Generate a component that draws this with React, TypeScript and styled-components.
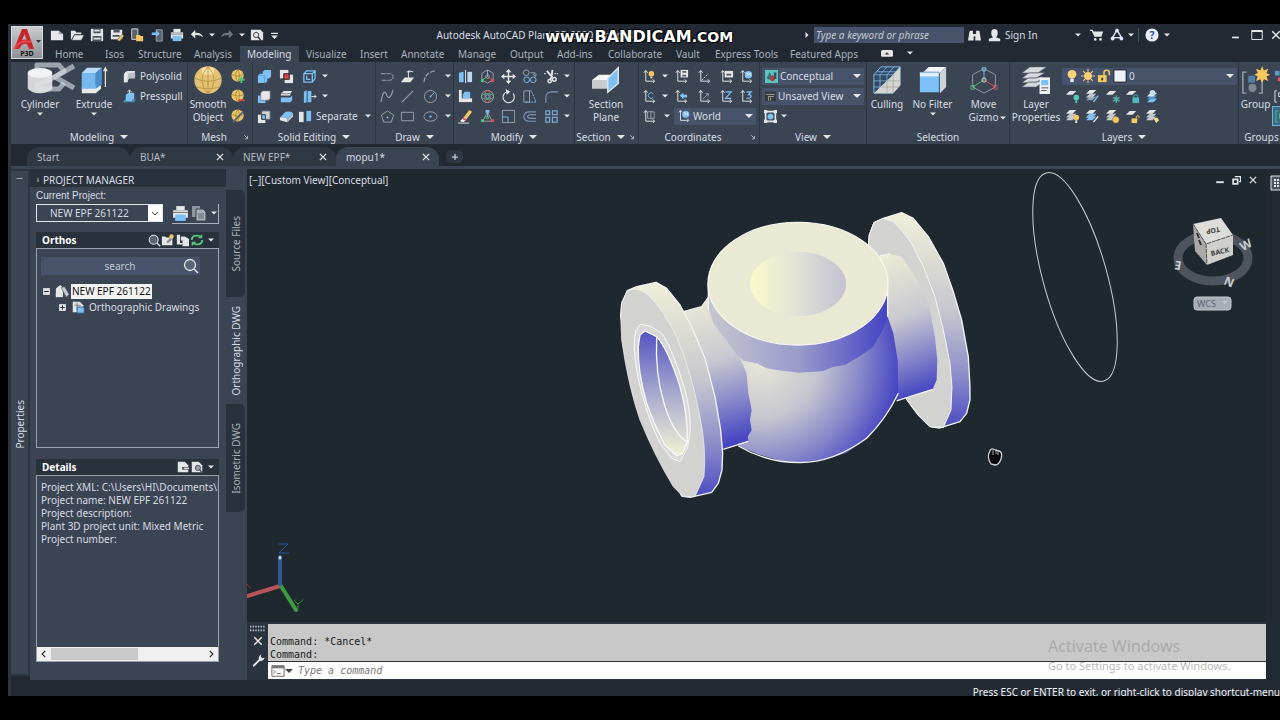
import React from "react";
import styled, { createGlobalStyle, css } from "styled-components";

const color = {
  panel: "#3b4453",
  bar: "#222933",
  canvas: "#20282f",
  dark: "#29313d",
  edge: "#2b333f",
  line: "#2d3541",
  field: "#46536a",
  text: "#d8dde4",
  muted: "#a9b1bb",
  frame: "#97a2b0",
};

const GlobalStyle = createGlobalStyle`
  * { box-sizing: border-box; }
  body { margin: 0; background: #000; overflow: hidden; }
  button, input, select {
    font: inherit; color: inherit; background: none; border: 0; margin: 0; padding: 0; border-radius: 0;
  }
  button { cursor: pointer; }
  svg { display: block; flex: none; }
`;

const Page = styled.div`
  height: 100vh;
  padding: 24px 0 24px 8px;
  background: #000;
  color: ${color.text};
  font: 10px/14px "Noto Sans", "Segoe UI", sans-serif;
`;

const Window = styled.div`
  display: flex;
  flex-direction: column;
  height: 100%;
  border-left: 3px solid ${color.edge};
  background: ${color.bar};
  overflow: hidden;
  white-space: nowrap;
  position: relative;
`;

/* ---------- header ---------- */

const Header = styled.header`
  display: flex;
  height: 38px;
  flex: none;
`;

const AppButton = styled.button`
  display: flex;
  flex: none;
  align-items: center;
  width: 32px;
  height: 33px;
  margin-top: 2px;
  background: linear-gradient(#c9cbce, #8e9196);
  border: 1px solid #d6d8da;
`;

const HeaderRows = styled.div`
  flex: 1;
  min-width: 0;
  display: flex;
  flex-direction: column;
`;

const TitleRow = styled.div`
  display: flex;
  align-items: center;
  height: 22px;
`;

const QuickBar = styled.div`
  display: flex;
  padding-left: 4px;
  flex: none;
`;

const IconButton = styled.button<{ $w?: number; $h?: number; $on?: boolean }>`
  display: flex;
  flex: none;
  align-items: center;
  justify-content: center;
  width: ${(p) => p.$w ?? 20}px;
  height: ${(p) => p.$h ?? 20}px;
  ${(p) => p.$on && css`background: #3d6a86; border: 1px solid #6fb1dc;`}
`;

const WindowTitle = styled.h1`
  flex: 1;
  margin: 0;
  padding-right: 12px;
  font-size: 10px;
  font-weight: 400;
  text-align: center;
  white-space: pre;
  overflow: hidden;
`;

const TitleTools = styled.div`
  display: flex;
  align-items: center;
  flex: none;
  width: 478px;
`;

const KeywordInput = styled.input`
  flex: none;
  width: 150px;
  height: 16px;
  margin-left: 2px;
  padding: 0 2px;
  background: ${color.field};
  font-style: italic;
  &::placeholder { color: #c3cad3; opacity: 1; }
`;

const SignIn = styled.button`
  flex: none;
  width: 64px;
  padding-left: 1px;
  text-align: left;
`;

const Divider = styled.span`
  flex: none;
  width: 1px;
  height: 14px;
  margin: 0 3px;
  background: #48515e;
`;

const WindowControls = styled.div`
  display: flex;
  flex: none;
  padding-left: 53px;
`;

const MenuRow = styled.nav`
  display: flex;
  height: 16px;
  padding-left: 5px;
`;

const MenuTab = styled.a<{ $w: number; $on?: boolean }>`
  flex: none;
  width: ${(p) => p.$w}px;
  padding-left: 7px;
  line-height: 16px;
  color: ${(p) => (p.$on ? color.text : color.muted)};
  background: ${(p) => (p.$on ? color.panel : "none")};
  text-decoration: none;
`;

/* ---------- ribbon ---------- */

const Ribbon = styled.div`
  display: flex;
  flex: none;
  height: 82px;
  background: ${color.panel};
`;

const PanelBox = styled.section<{ $w: number }>`
  display: flex;
  flex-direction: column;
  flex: none;
  width: ${(p) => p.$w}px;
  border-right: 1px solid ${color.line};
`;

const PanelBody = styled.div<{ $pad?: number }>`
  display: flex;
  height: 67px;
  padding: 4px 0 0 ${(p) => p.$pad ?? 0}px;
`;

const PanelTitle = styled.div`
  display: flex;
  align-items: center;
  height: 15px;
`;

const PanelName = styled.h2`
  display: flex;
  align-items: center;
  justify-content: center;
  gap: 6px;
  flex: 1;
  margin: 0;
  font-size: 10px;
  font-weight: 400;
`;

const BigButton = styled.button<{ $w: number }>`
  display: flex;
  flex: none;
  flex-direction: column;
  align-items: center;
  width: ${(p) => p.$w}px;
  line-height: 13px;
  & > svg + span { margin-top: 4px; }
`;

const CaretLine = styled.span`
  display: flex;
  align-items: center;
  gap: 2px;
  padding-left: 8px;
`;

const Stack = styled.div<{ $pad?: number }>`
  display: flex;
  flex-direction: column;
  flex: none;
  padding-left: ${(p) => p.$pad ?? 0}px;
`;

const ToolRow = styled.div`
  display: flex;
  align-items: center;
  height: 20px;
`;

const TextButton = styled.button<{ $w?: number }>`
  display: flex;
  align-items: center;
  gap: 3px;
  height: 20px;
  width: ${(p) => (p.$w ? p.$w + "px" : "auto")};
`;

const Picker = styled.label<{ $w: number }>`
  display: flex;
  align-items: center;
  flex: none;
  gap: 2px;
  width: ${(p) => p.$w}px;
  height: 17px;
  padding: 0 3px;
  background: ${color.field};
  & > select { flex: 1; min-width: 0; appearance: none; outline: 0; }
`;

/* ---------- document tabs ---------- */

const FileTabs = styled.div`
  display: flex;
  align-items: flex-end;
  flex: none;
  height: 22px;
  padding-left: 16px;
`;

const FileTab = styled.div<{ $on?: boolean }>`
  display: flex;
  align-items: center;
  flex: none;
  width: 103px;
  height: 19px;
  padding: 0 4px 0 10px;
  border-radius: 12px 12px 0 0;
  background: ${(p) => (p.$on ? color.panel : "#2f3743")};
  color: ${(p) => (p.$on ? color.text : "#b4bbc4")};
  & > span { flex: 1; }
`;

const AddTab = styled.button`
  display: flex;
  align-items: center;
  justify-content: center;
  width: 17px;
  height: 13px;
  margin: 0 0 3px 7px;
  border-radius: 5px;
  background: #2f3743;
`;

/* ---------- workspace ---------- */

const Workspace = styled.main`
  display: flex;
  flex: 1;
  min-height: 0;
  border-top: 3px solid ${color.panel};
`;

const Rail = styled.aside`
  display: flex;
  flex: none;
  flex-direction: column;
  align-items: center;
  width: 19px;
  margin-bottom: 4px;
  padding-top: 4px;
  background: ${color.panel};
  border: 2px solid ${color.line};
  border-left: 0;
  & > svg { margin-bottom: 218px; }
`;

const SideText = styled.span`
  writing-mode: vertical-rl;
  transform: rotate(180deg);
`;

const Manager = styled.aside`
  display: flex;
  flex: none;
  width: 217px;
  background: ${color.panel};
`;

const ManagerBody = styled.div`
  display: flex;
  flex-direction: column;
  width: 196px;
`;

const ManagerHead = styled.h2`
  display: flex;
  align-items: center;
  gap: 2px;
  height: 18px;
  margin: 0;
  padding: 3px 0 0 5px;
  background: ${color.dark};
  font-size: 10px;
  font-weight: 400;
`;

const ManagerForm = styled.div`
  display: flex;
  flex-direction: column;
  flex: 1;
  min-height: 0;
  padding: 2px 7px 18px 6px;
`;

const ProjectLabel = styled.label`
  font: 10px/13px "Liberation Sans", Arial, sans-serif;
`;

const ProjectRow = styled.div`
  display: flex;
  gap: 9px;
  margin-top: 2px;
`;

const ProjectPick = styled.div`
  display: flex;
  width: 127px;
  height: 18px;
  border: 1px solid #e2e6ea;
  background: ${color.panel};
  & > select { flex: 1; appearance: none; outline: 0; padding-left: 13px; }
  & > svg { background: #fff; }
`;

const ProjectTools = styled.div`
  display: flex;
  width: 47px;
  height: 20px;
  border: 1px solid #a9b3c0;
  border-width: 0 1px 1px 0;
`;

const SectionHead = styled.div<{ $gap: number }>`
  display: flex;
  align-items: center;
  flex: none;
  height: 16px;
  margin-top: ${(p) => p.$gap}px;
  padding: 0 2px 0 6px;
  background: ${color.dark};
  & > h3 { flex: 1; margin: 0; font-size: 10px; color: #fff; }
`;

const TreeBox = styled.div`
  flex: none;
  height: 200px;
  padding: 8px 4px;
  border: 1px solid ${color.frame};
`;

const SearchField = styled.label`
  display: flex;
  align-items: center;
  width: 159px;
  height: 18px;
  margin-bottom: 8px;
  padding: 0 1px 0 16px;
  background: ${color.field};
  & > input { flex: 1; min-width: 0; text-align: center; outline: 0; }
  & > input::placeholder { color: #c3cad3; opacity: 1; }
`;

const TreeRow = styled.div<{ $indent: number }>`
  display: flex;
  align-items: center;
  gap: 4px;
  height: 16px;
  padding-left: ${(p) => p.$indent}px;
`;

const Selected = styled.span`
  background: #f2f2f2;
  color: #111;
  margin-left: -2px;
  padding: 0 1px;
  line-height: 15px;
`;

const DetailBox = styled.div`
  display: flex;
  flex-direction: column;
  flex: 1;
  min-height: 0;
  border: 1px solid ${color.frame};
  & > p { margin: 5px 0 0 4px; flex: 1; line-height: 13px; white-space: pre; overflow: hidden; }
`;

const ScrollBar = styled.div`
  display: flex;
  align-items: center;
  height: 14px;
  background: #f0f0f0;
`;

const Track = styled.div`
  flex: 1;
`;

const Thumb = styled.div`
  width: 57%;
  height: 12px;
  background: #c9c9c9;
`;

const SideTabs = styled.div`
  display: flex;
  flex-direction: column;
  width: 21px;
  padding-top: 21px;
`;

const SideTab = styled.button<{ $h: number; $on?: boolean }>`
  display: flex;
  align-items: center;
  justify-content: center;
  width: 19px;
  height: ${(p) => p.$h}px;
  border-radius: 0 5px 5px 0;
  background: ${(p) => (p.$on ? color.panel : color.dark)};
  color: ${(p) => (p.$on ? color.text : color.muted)};
`;

const Stage = styled.div`
  display: flex;
  flex-direction: column;
  flex: 1;
  min-width: 0;
`;

const Viewport = styled.div`
  position: relative;
  flex: 1;
  display: flex;
  justify-content: space-between;
  align-items: flex-start;
  padding-top: 4px;
  background: ${color.canvas};
  overflow: hidden;
`;

const Scene = styled.svg`
  position: absolute;
  inset: 0;
  width: 100%;
  height: 100%;
`;

const ViewLabel = styled.span`
  position: relative;
  padding-left: 2px;
`;

const ViewControls = styled.div`
  position: relative;
  display: flex;
  width: 55px;
  flex: none;
`;

const CubeBox = styled.div`
  position: absolute;
  right: 12px;
  top: 40px;
`;

const Command = styled.div`
  display: flex;
  flex: none;
  height: 58px;
  padding-top: 2px;
  background: ${color.edge};
  font-family: "DejaVu Sans Mono", monospace;
`;

const CommandTools = styled.div`
  display: flex;
  flex-direction: column;
  align-items: center;
  width: 21px;
`;

const CommandArea = styled.div`
  flex: 1;
  display: flex;
  flex-direction: column;
`;

const CommandLog = styled.pre`
  flex: none;
  height: 38px;
  margin: 0;
  padding: 11px 2px 0;
  background: #c8c8c8;
  color: #1a1a1a;
  font: 10px/13px "DejaVu Sans Mono", monospace;
  border-bottom: 1px solid #333;
`;

const CommandLine = styled.label`
  display: flex;
  align-items: center;
  height: 17px;
  padding-left: 3px;
  background: #fff;
  & > input { flex: 1; padding-left: 5px; font-style: italic; outline: 0; color: #333; }
  & > input::placeholder { color: #777; opacity: 1; }
`;

const RightRail = styled.div`
  flex: none;
  width: 14px;
  padding: 6px 0 0 4px;
  background: ${color.bar};
  overflow: hidden;
`;

const Status = styled.footer`
  flex: none;
  height: 16px;
  padding-top: 5px;
  text-align: right;
  color: #f0f2f4;
  overflow: hidden;
`;

/* ---------- watermarks lying over the window ---------- */

const Bandicam = styled.div`
  position: absolute;
  left: 534px;
  top: 3px;
  display: flex;
  align-items: baseline;
  font: bold 16px/20px "DejaVu Sans", sans-serif;
  color: #fff;
  text-shadow: 0 0 2px #000, 1px 1px 1px #000, -1px -1px 1px #000;
  & > small { font-size: 14px; }
`;

const EditorMark = styled.div`
  position: absolute;
  left: 22px;
  top: 36px;
`;

const Activate = styled.div`
  position: absolute;
  right: 41px;
  bottom: 21px;
  width: 191px;
  font-size: 11px;
  line-height: 18px;
  color: rgba(160, 160, 160, 0.75);
  & > strong { display: block; font-size: 16px; font-weight: 400; line-height: 22px; }
`;

/* ---------- icons ---------- */

const W = "#e4e6e8";
const B = "#7cc0f5";
const G = "#9aa3ad";
const Y = "#f5c860";

const ucs = (
  <g stroke={W} fill="none" strokeWidth="1">
    <path d="M4 2v11h9" />
    <path d="M2 4l2-2.500 2 2.500M11.500 11l2 2-2 2" />
  </g>
);
const sheet = (x: number, y: number, c: string) => <path d={`M${x} ${y + 4}l4-4h7l-4 4z`} fill={c} />;
const layers = (c2: string) => (
  <>
    {sheet(1, 8, c2)}
    {sheet(1, 5, "#c4c8cc")}
    {sheet(1, 1, W)}
  </>
);
const ball = (
  <>
    <circle cx="7" cy="7" r="6.500" fill="#e9c567" />
    <path d="M1 6q6 3 12 0M7 .5q-4 6 0 13M7 .5q4 6 0 13" stroke="#8e6f22" fill="none" strokeWidth=".6" />
  </>
);
const doc = <path d="M2 2h8l4 4v8H2z" fill={W} />;

const art: Record<string, React.ReactNode> = {
  new: <><path d="M1 3h9l5 4v7H1z" fill={W} /><path d="M10 3v4h5z" fill="#9aa0a6" /></>,
  open: <><path d="M1 14V3h5l1 2h6v2H5z" fill={W} /><path d="M5 8h11l-3 6H2z" fill={W} stroke="#333" strokeWidth=".5" /></>,
  save: <><path d="M1 1h14v14H1z" fill={W} /><path d="M4 1h8v5H4zM3 9h10v6H3z" fill="#4d545c" /><path d="M5 2h6v2H5zM4 11h8v2H4z" fill={W} /></>,
  saveAs: <><path d="M1 2h13v11H1z" fill={W} /><path d="M4 2h7v3H4zM3 8h8v2H3z" fill="#4d545c" /><path d="M8 14l6-7 2 2-5 6z" fill={Y} stroke="#333" strokeWidth=".5" /></>,
  openWeb: <><path d="M2 1h7v12H2z" fill="#5a626c" stroke={W} /><path d="M7 8h4l1 1h3v6H7z" fill={Y} /></>,
  saveWeb: <><path d="M7 2h7v13H7z" fill="#5a626c" stroke={G} /><path d="M2 5h5V2l4 4.500-4 4V8H2z" fill={B} /></>,
  print: <><path d="M4 1h8v4H4z" fill={W} /><path d="M1 5h14v7H1z" fill={W} /><path d="M3 9h10v6H3z" fill={B} /><path d="M1 7h14" stroke="#777" /></>,
  undo: <path d="M1 7l5-5v3.500q7-.5 9 5-4-3-9-2.500V12z" fill={W} />,
  redo: <path d="M15 7l-5-5v3.500q-7-.5-9 5 4-3 9-2.500V12z" fill="#6d7682" />,
  preview: <><path d="M1 2h11l3 3v9H1z" fill={W} /><circle cx="7" cy="8" r="3" fill="none" stroke="#333" /><path d="M9 10l4 5" stroke="#333" strokeWidth="1.500" /></>,
  menu: <><path d="M3 4h10v1.800H3z" fill={W} /><path d="M3 8h10l-5 5z" fill={W} /></>,
  find: <g fill={W}><path d="M2 2h4v4h4V2h4l2 12H9V9H7v5H0z" /></g>,
  user: <g fill={W}><path d="M8 0q4 0 4 4.500T9.500 10l5.500 2v3H1v-3l5.500-2Q4 9 4 4.500T8 0z" /></g>,
  cart: <g fill={W}><path d="M0 2h3l1 2h11l-2 6H5L2 3.500H0z" /><circle cx="6" cy="13" r="1.500" /><circle cx="12" cy="13" r="1.500" /></g>,
  a360: <><path d="M8 2L3 11h10z" fill="none" stroke="#dfe6ff" strokeWidth="1.600" /><circle cx="8" cy="3" r="2.200" fill="#dfe6ff" /><circle cx="3" cy="12" r="2.200" fill="#dfe6ff" /><circle cx="13" cy="12" r="2.200" fill="#dfe6ff" /></>,
  help: <><circle cx="8" cy="8" r="7.500" fill="#e9eef8" /><text x="8" y="12" textAnchor="middle" fontSize="12" fontWeight="bold" fill="#3350b0">?</text></>,
  polysolid: <><path d="M2 14V7q0-5 6-5h6v8h-5q-3 0-3 4z" fill="#b9bec4" /><path d="M2 7q0-5 6-5h6l-2 2H9Q6 4 6 8v6H2z" fill={W} /></>,
  presspull: <><path d="M4 6l3-2h6v7l-3 2H4z" fill={B} /><path d="M1 14l3-4v3h7l4-3-2 4z" fill="#4f94cc" /><path d="M8 5V1M6 3l2-2 2 2" stroke={W} fill="none" /></>,
  ballAdd: <>{ball}<path d="M11 8v7M7.500 11.500h7" stroke="#52c468" strokeWidth="2" /></>,
  ballSub: <>{ball}<path d="M8 12h6.500" stroke="#d8473c" strokeWidth="2" /></>,
  ballEdit: <>{ball}<path d="M2 14L13 3" stroke="#5b6470" strokeWidth="2" /></>,
  union: <><path d="M1 7l2-2h3V3l2-2h7v7l-2 2h-2v3l-2 2H1z" fill={B} /><path d="M1 7h7v8" stroke="#4b90cc" fill="none" strokeWidth=".6" /></>,
  subtract: <><path d="M1 1h9v9H1z" fill={W} /><path d="M6 6h9v9H6z" fill={W} /><path d="M5 5h6v6H5z" fill="#d2434b" stroke="#222" /></>,
  box3: <g stroke={B} fill="none" strokeWidth="1.400"><path d="M2 5l3-3h9v8l-3 4H2zM2 5h9v9M11 5l3-3M5 7v4h4" /></g>,
  intersect: <><path d="M1 7h8v8H1z" fill={B} /><path d="M4 4l2-2h8v8l-2 2H4z" fill={W} stroke="#6c747e" strokeWidth=".7" /></>,
  slice: <><path d="M2 5l3-3h9l-2 3v2H2z" fill={W} /><path d="M2 9h10l2-2v5l-2 2H2z" fill={B} /><path d="M2 5h10" stroke="#888" /></>,
  taper: <><path d="M2 3l3-2v13l-3 1zM6 2h4v12H6z" fill={B} /><path d="M10 8h5M13 6l2 2-2 2" stroke={W} fill="none" /></>,
  interfere: <><path d="M1 6h8v9H1z" fill={W} /><path d="M5 2h9v9H5z" fill="#cdd2d8" stroke="#59616c" /><path d="M5 6h4v5H5z" fill={B} stroke="#333" /></>,
  fillet3: <><path d="M1 9l6-6q7-1 8 2l-6 6q-2-3-8-2z" fill={B} /><path d="M1 9q6-1 8 2v3l-8-2z" fill={W} /><path d="M9 11l6-6v3l-6 6z" fill="#c0c5cb" /></>,
  split: <><path d="M1 3h5v11H1z" fill={W} /><path d="M9 2h5v11H9z" fill={B} /></>,
  polyline: <path d="M1 5h9q4 0 4 3.500t-4 3.500H1" fill="none" stroke={G} strokeDasharray="5 1" />,
  planar: <><path d="M1 14l4-5h10l-4 5z" fill={W} /><path d="M9 11V2l5 1M7 3h4" stroke={W} fill="none" /></>,
  arc: <path d="M1 14Q2 4 13 2" fill="none" stroke={G} strokeDasharray="5 1.500" strokeWidth="1.300" />,
  spline: <path d="M1 14Q4-2 7 6t7-5" fill="none" stroke={G} strokeWidth="1.200" />,
  line: <path d="M2 14L14 2" stroke={G} strokeWidth="1.200" />,
  circle: <><circle cx="8" cy="8" r="6.500" fill="none" stroke={G} /><path d="M8 8l4-4" stroke={B} /><circle cx="8" cy="8" r="1" fill={B} /></>,
  polygon: <><path d="M8 2l6.500 4.500L12 14H4L1.500 6.500z" fill="none" stroke={G} /><circle cx="8" cy="9" r="1" fill={B} /></>,
  rect: <path d="M1.500 3.500h13v9h-13z" fill="none" stroke={G} />,
  ellipse: <><ellipse cx="8" cy="8" rx="7" ry="5" fill="none" stroke={G} /><circle cx="8" cy="8" r="1.200" fill={B} /></>,
  mirror3: <><path d="M1 4l5-1v11H1z" fill={B} /><path d="M8 1v14" stroke={W} /><path d="M10 3h5v11h-5z" fill="#b9d9f2" /></>,
  gizmo: <><path d="M8 1l6 3.500v7L8 15l-6-3.500v-7z" fill="none" stroke={G} /><path d="M8 8V1" stroke={B} /><path d="M8 8l-6 4" stroke="#50c080" /><path d="M8 8l6 4" stroke="#e05060" /><circle cx="8" cy="8" r="2" fill="none" stroke={G} /><path d="M1 11h3v3H1z" fill="#50c080" /><path d="M12 11h3v3h-3z" fill="#e05060" /></>,
  move: <><path d="M8 1v14M1 8h14" stroke={W} strokeWidth="1.600" /><path d="M8 0l3 3.500H5zM8 16l3-3.500H5zM0 8l3.500-3v6zM16 8l-3.500-3v6z" fill={W} /></>,
  copy: <g fill="none"><circle cx="4.500" cy="4" r="3" stroke={G} /><circle cx="5" cy="11.500" r="3" stroke={B} /><circle cx="12" cy="11.500" r="3" stroke={B} /><path d="M9 4h5v3M12 5.500L14 8l2-2.500" stroke={G} /></g>,
  trim: <><path d="M3 2l6 7M9 1L8 9l-2 3" stroke={W} strokeWidth="2" fill="none" /><path d="M0 5h3M11 5h4" stroke={W} strokeDasharray="2 1" /><circle cx="11" cy="11" r="2" fill="none" stroke={W} strokeWidth="1.500" /><circle cx="6" cy="13" r="1.800" fill="none" stroke={W} strokeWidth="1.500" /></>,
  align3: <><path d="M1 1h3v13H1z" fill={W} /><path d="M5 6l2-3h6v7H5z" fill={B} /><path d="M3 10h12v4H3z" fill={W} /></>,
  rotate3: <g fill="none"><circle cx="8" cy="8" r="6.500" stroke={G} /><ellipse cx="8" cy="8" rx="3" ry="6.500" stroke="#e05060" /><ellipse cx="8" cy="8" rx="6.500" ry="3" stroke="#50c080" /><circle cx="8" cy="8" r="2" stroke={B} /></g>,
  rotate: <><path d="M13 5A6 6 0 1 1 6 3" fill="none" stroke={W} strokeWidth="1.200" /><path d="M5 0l5 3-4 3z" fill={W} /></>,
  stretch: <g fill="none"><path d="M2 2h6v12H2z" stroke={G} /><path d="M8 2h2l5 12H4" stroke={B} strokeDasharray="2 1" /></g>,
  filletc: <path d="M2 15V9q0-6 7-6h6" fill="none" stroke="#7896b8" strokeWidth="1.200" />,
  erase: <><path d="M0 15h12" stroke={W} /><path d="M2 13l4-4 3 2-3 3z" fill="#f2f2f2" /><path d="M6 9l6-8 3 2-6 8z" fill={Y} /><path d="M5 10l4 2" stroke="#e05060" strokeWidth="1.500" /></>,
  scale3: <g fill="none"><path d="M8 3L3 13h10z" stroke={G} /><path d="M8 9v-5" stroke={B} /><path d="M6 1h4v3H6z" fill={B} /><path d="M1 11h3v3H1z" fill="#50c080" /><path d="M12 11h3v3h-3z" fill="#e05060" /><circle cx="8" cy="9" r="1.500" stroke="#50c080" /></g>,
  scale: <g fill="none"><path d="M1.500 1.500h13v13h-13z" stroke={G} /><path d="M1.500 8.500h6v6" stroke={B} /></g>,
  offset: <path d="M15 3H8Q2 3 2 8t6 5h7M15 6H9q-3 0-3 2t3 2h6" fill="none" stroke="#7896b8" strokeWidth="1.200" />,
  array: <g fill="none" stroke="#7fa8d0" strokeWidth="1.300"><path d="M2 2h4v4H2zM9 2h5v4H9zM2 9h4v5H2zM9 9h5v5H9z" /></g>,
  ucsBulb: <>{ucs}<circle cx="10" cy="5" r="3" fill={Y} /><path d="M9 8h2v2H9z" fill={W} /></>,
  ucsRot: <>{ucs}<path d="M12 5a3 3 0 1 0 0 4" stroke={B} fill="none" /></>,
  ucsGrid: <>{ucs}<path d="M6 3h7v7H6zM9.500 2v9" fill="none" stroke={G} /></>,
  ucsSave: <>{ucs}<path d="M7 1h8v8H7z" fill={W} /><path d="M9 2h4v2H9zM9 6h4v2H9z" fill="#555e68" /></>,
  ucsBack: <>{ucs}<path d="M6 7l4-3v2h4v3h-4v2z" fill={B} /></>,
  ucsPt: <>{ucs}<path d="M5 12l7-7" stroke={W} strokeDasharray="2 1" /></>,
  ucsZpt: <>{ucs}<path d="M6 11l6-6M9 5h3v3" stroke={G} fill="none" /></>,
  ucsView: <>{ucs}<path d="M6 2h9v7H6z" fill={W} /><path d="M8 5h5v2H8z" fill="#555e68" /></>,
  ucsZ: <>{ucs}<path d="M7 3h6L7 10h6" stroke={B} fill="none" strokeWidth="1.300" /></>,
  ucsWorld: <>{ucs}<circle cx="10" cy="6" r="4" fill={B} /><path d="M8 4q3 1 1 3M12 4q-2 2 1 3" stroke="#fff" fill="none" /></>,
  ucs3: <>{ucs}<path d="M8 3h5l-3 3q3 0 3 2t-5 2" stroke={B} fill="none" strokeWidth="1.300" /></>,
  concept: <><path d="M0 0h16v16H0z" fill="#5cc4bd" /><path d="M2 10l4-8 3 8-4 2z" fill="#3a6f78" /><path d="M6 9l3-3 3 2v4l-3 2-3-2z" fill="#b13a42" /><path d="M11 3h3v8h-3z" fill="#2d5560" /></>,
  unsaved: <><path d="M0 1h16v14H0z" fill="#343a40" /><path d="M2 5h12M5 14V8h8M8 14V10" stroke="#d9c8a8" fill="none" /></>,
  viewBox: <><path d="M2 2h12v12H2z" fill="none" stroke={W} strokeWidth="2" /><path d="M0 0h4v4H0zM12 0h4v4h-4zM0 12h4v4H0zM12 12h4v4h-4z" fill={W} /><path d="M4 4h8v8H4z" fill="#4d5866" /><circle cx="8" cy="8" r="3.500" fill={B} /></>,
  bulb: <><circle cx="8" cy="6" r="5" fill="#f9d27a" /><path d="M6 11h4v4H6z" fill={W} /></>,
  sun: <><circle cx="8" cy="8" r="4.500" fill="#f9d27a" /><path d="M8 0v3M8 13v3M0 8h3M13 8h3M2.500 2.500l2 2M11.500 11.500l2 2M2.500 13.500l2-2M11.500 4.500l2-2" stroke="#f9d27a" strokeWidth="1.300" /></>,
  unlock: <><path d="M1 7h10v8H1z" fill={Y} /><path d="M8 8V4q0-2.500 3-2.500T14 4v3" stroke={Y} strokeWidth="1.800" fill="none" /><path d="M5 10h2v3H5z" fill="#333" /></>,
  swatch: <path d="M1 1h14v14H1z" fill="#eef2fa" stroke="#111" />,
  lyOff: <>{sheet(1, 2, W)}<circle cx="12" cy="9" r="3" fill="#55c9b5" /><path d="M11 12h2v3h-2z" fill="#55c9b5" /></>,
  lyIso: <>{layers("#8fa3b5")}<path d="M9 14l5-7" stroke={B} strokeWidth="1.500" /></>,
  lyFrz: <>{sheet(1, 2, W)}<path d="M12 7v8M8.500 9l7 4M8.500 13l7-4" stroke="#4fb8a8" strokeWidth="1.500" /></>,
  lyLck: <>{sheet(1, 2, W)}<path d="M8 9h7v6H8z" fill="#4fb8c0" /><path d="M9.500 9V7q2-2 4 0v2" stroke="#4fb8c0" fill="none" /></>,
  lyCur: <>{sheet(2, 10, B)}{sheet(2, 7, "#4f94cc")}{sheet(2, 4, W)}<circle cx="8" cy="4" r="3" fill="#c6ddec" /></>,
  lyOn: <>{layers("#c4c8cc")}<circle cx="12" cy="9" r="3" fill={Y} /><path d="M11 12h2v3h-2z" fill={W} /></>,
  lyUniso: <>{layers(B)}{sheet(1, 5, B)}<path d="M9 14l5-6" stroke={W} strokeWidth="1.500" /></>,
  lyThw: <>{layers("#c4c8cc")}<circle cx="11.500" cy="11.500" r="3.500" fill={Y} stroke="#8a6a20" strokeDasharray="1 1" /></>,
  lyUnl: <>{sheet(1, 2, W)}<path d="M7 10h6v5H7z" fill={Y} /><path d="M12 10V8q2-2 3 0v2" stroke={Y} fill="none" /></>,
  lyMat: <>{layers("#c4c8cc")}<path d="M9 10l4-1 2 3-3 3z" fill="#f3dc9a" /></>,
  grp1: <><path d="M1 2h5v5H1z" fill="#5b9bc8" /><path d="M4 9h4v4H4z" fill="#e05060" /></>,
  grp2: <path d="M3 2H1v12h2M5 4h6v4H5z" stroke={W} fill="none" />,
  grp3: <path d="M4 2H2v12h2M6 5h6v5H6z" stroke="#50c080" fill="none" />,
  mag: <><circle cx="7" cy="7" r="5.500" fill="#5a6473" stroke={W} strokeWidth="1.300" /><path d="M11 11l4 4" stroke={W} strokeWidth="1.600" /></>,
  newDwg: <><path d="M1 4h4l1 1h7v9H1z" fill={W} /><path d="M6 10l5-5 2 2-5 5z" fill="#8a9098" /><circle cx="12" cy="4" r="2.500" fill={Y} /></>,
  sheets: <><path d="M1 1h4v10h3v2H1z" fill={W} /><path d="M6 3h5l5 3v9H8V8H6z" fill={W} /></>,
  refresh: <g fill="none" stroke="#58c47c" strokeWidth="2.200"><path d="M2 8q0-5 6-5 3 0 5 2M14 8q0 5-6 5-3 0-5-2" /><path d="M14 1v5H9zM2 15v-5h5z" fill="#58c47c" stroke="none" /></g>,
  docs: <g fill="#8e969f"><path d="M1 1h8v11H1z" /><path d="M5 4h7l3 3v9H5z" fill="#a8afb7" stroke="#3b4453" /><path d="M7 9h6M7 11h6M7 13h6" stroke="#5c646e" /></g>,
  proj: <><path d="M1 5l5-4 3 3v10H1z" fill={W} /><path d="M7 4l4-1 5 9-3 3z" fill="#c9ccd0" stroke="#59616c" strokeWidth=".7" /><path d="M1 10h8v5H1z" fill={W} /></>,
  ortho: <>{doc}<path d="M4 6h7M7 3v9" stroke="#777" /><path d="M7 8h8v7H7z" fill={B} stroke="#3b5a78" /></>,
  expDoc: <>{doc}<path d="M7 8h7v3H7z" fill="#444b55" /><path d="M9 9.500h6" stroke={W} strokeWidth="1.500" /></>,
  prevDoc: <>{doc}<circle cx="9" cy="9" r="3" fill="#9aa3ad" stroke="#444b55" /><path d="M11 11l3 4" stroke="#444b55" strokeWidth="1.500" /></>,
  minusBox: <><path d="M2 2h12v12H2z" fill={W} /><path d="M4 8h8" stroke="#222" strokeWidth="2" /></>,
  plusBox: <><path d="M2 2h12v12H2z" fill={W} /><path d="M4 8h8M8 4v8" stroke="#222" strokeWidth="1.600" /></>,
  x: <path d="M3 3l10 10M13 3L3 13" stroke={W} strokeWidth="2" />,
  min: <path d="M2 10h12v3H2z" fill={W} />,
  max: <><path d="M1 2h14v12H1z" fill="none" stroke={W} strokeWidth="1.300" /><path d="M1 2h14v2H1z" fill={W} /></>,
  restore: <><path d="M5 1h10v9h-3" fill="none" stroke={W} strokeWidth="2" /><path d="M2 6h8v8H2z" fill="none" stroke={W} strokeWidth="3" /></>,
  plus: <path d="M8 2v12M2 8h12" stroke="#c5cad0" strokeWidth="2.500" />,
  wrench: <path d="M2 14l7-7q-1-4 3-5.500L11 4l2 2 2.500-1Q15 9 10 9l-7 7z" fill={W} />,
  prompt: <><path d="M1 2h14v12H1z" fill="#fff" stroke="#555" /><path d="M1 2h14v3H1z" fill="#777" /><path d="M3 7l2 2-2 2M7 11h4" stroke="#444" fill="none" /></>,
  grip: <path d="M0 6h16M0 10h16" stroke="#b9c0c9" strokeWidth="2" strokeDasharray="1.500 1.300" />,
  dash: <path d="M1 8h14" stroke="#aab2bd" strokeWidth="2" />,
  gripV: <path d="M8 2v12" stroke="#808996" strokeWidth="6" strokeDasharray="2 1" />,
  calc: <><path d="M1 1h15v14H1z" fill="#4a5361" stroke={W} /><path d="M4 4h2v2H4zM7 4h2v2H7zM4 7h2v2H4zM7 7h2v2H7zM4 10h2v2H4zM7 10h2v2H7z" fill={W} /></>,
  left: <path d="M10 3L5 8l5 5" fill="none" stroke="#333" strokeWidth="2" />,
  right: <path d="M6 3l5 5-5 5" fill="none" stroke="#333" strokeWidth="2" />,
  panelUp: <><rect x="0" y="4" width="16" height="9" rx="2" fill={W} /><path d="M5 10h6L8 7z" fill="#333" /></>,
  launch: <path d="M3 3l6 6M12 5v8H5M12 12L7 7" stroke="#c5cad0" strokeWidth="2" fill="none" />,
  tri: <path d="M5 2l6 6-6 6z" fill={W} />,
  /* large icons, drawn on the same 16-unit grid */
  cylinder: <><path d="M1 4v9q3 3 8 2.500T15 13V4z" fill="#d4d6d8" /><ellipse cx="8" cy="4" rx="7" ry="2.800" fill="#f2f3f4" /></>,
  extrude: <><path d="M1 12l3-1h8v2l-3 2.500H1z" fill="#e8eaec" /><path d="M1 4h8v9H1z" fill="#76b9ef" /><path d="M1 4l3-3h8.500L9 4z" fill="#b8dcf8" /><path d="M9 4l3.500-3v9.500L9 13z" fill="#4b90cc" /><path d="M14.500 12V1.500M13.500 3l1-2 1 2" stroke={W} strokeWidth=".7" fill="none" /></>,
  smooth: <><circle cx="8" cy="8" r="7.800" fill="#e4c272" /><path d="M4 1.500q4-2 8 0L11 5H5z" fill="#f4dfa0" /><path d="M.5 7q7.500 3.500 15 0M8 .2v15.600M8 .2q-7 8 0 15.600M8 .2q7 8 0 15.600M1.500 12q6.500 2 13 0" stroke="#a8862f" strokeWidth=".35" fill="none" /></>,
  section: <><path d="M0 8l4-3h8l-3 3z" fill="#f5f6f7" /><path d="M0 8h9v5H0z" fill="#c9cccf" /><path d="M9 7l6-6v9l-6 5z" fill={B} stroke={W} strokeWidth=".8" /></>,
  culling: <><path d="M.5 5l4-4.500h11V11l-4 4.500H.5z" fill="#2f4a66" stroke="#8fc4ec" strokeWidth=".5" /><path d="M.5 5h11v10.500M.5 8.500h11M.5 12h11M4 5v10.500M8 5v10.500M11.500 5l4-4.500M2 3.300h11M8 .5L4 5M12 .5L8 5M13 3.500v10M11.500 8.500l4-4M11.500 12l4-4" stroke="#8fc4ec" strokeWidth=".4" fill="none" /><path d="M11.500 5l4-4.500V11l-4 4.500H.5z" fill="#dcdcd6" fillOpacity=".95" /><path d="M11.500 5v10.500M8 8.500v7M5 12h10M8 8.500h7.500" stroke="#8e8e88" strokeWidth=".3" /></>,
  nofilter: <><path d="M2 4l3.500-3.500h10L12 4z" fill="#f4f5f6" /><path d="M12 4l3.500-3.500V12L12 15.500z" fill="#d0d3d6" /><path d="M.5 3.500h11V15H.5z" fill={B} /><path d="M.5 3.500h11V6H.5z" fill="#dfeefa" /><path d="M.5 3.500h11V15" stroke="#3f7fb8" strokeWidth=".4" fill="none" /></>,
  gizmoL: <g fill="none" strokeWidth=".5"><path d="M8 1.500l6.500 3.500v7L8 15.500 1.500 12V5z" stroke={G} /><path d="M8 8V1.500" stroke={B} /><path d="M8 8l-6.500 4" stroke="#50c080" /><path d="M8 8l6.500 4" stroke="#e05060" /><path d="M7 .8h2v2H7z" stroke={B} /><path d="M.5 11.200h2v2h-2z" stroke="#50c080" /><path d="M13.500 11.200h2v2h-2z" stroke="#e05060" /><circle cx="8" cy="8" r="1.200" stroke={W} /></g>,
  layerL: <><path d="M0 12l4-3h8l-4 3zM0 9.500l4-3h8l-4 3zM0 7l4-3.200h9L8 7zM0 4l4.500-3.500H14L9 4z" fill="#d8dadd" stroke="#59616c" strokeWidth=".3" /><path d="M10 6.500h6V16h-6z" fill="#eef0f2" /><path d="M11 8h4v3h-4z" fill={B} /><path d="M11 12.500h4M11 14h3" stroke="#444" strokeWidth=".5" /></>,
  groupL: <><path d="M2.500 3.500h-2v12h2M9.500 15.500h2V8" fill="none" stroke={G} strokeWidth=".8" /><path d="M3.500 5.500h4v4h-4z" fill="#4f7fa6" /><circle cx="6" cy="12.500" r="2.300" fill="#7c8590" /><path d="M11.500 0l1 2.500L15 1.500l-1 2.500 2 1-2 1 1 2.500-2.500-1-1 2-1-2L8 8.500 9 6 7 5l2-1-1-2.500 2.500 1z" fill={Y} /></>,
};

const Icon = ({ n, s = 15 }: { n: string; s?: number }) => (
  <svg width={s} height={s} viewBox="0 0 16 16" aria-hidden="true">
    {art[n]}
  </svg>
);

const Caret = ({ big = false, fill = W }: { big?: boolean; fill?: string }) => (
  <svg width={big ? 8 : 6} height={big ? 8 : 6} viewBox="0 0 8 8" aria-hidden="true">
    <path d="M0 2h8L4 6z" fill={fill} />
  </svg>
);

const Tool = ({ n, w = 20, s = 15, h = 20, on = false }: { n: string; w?: number; s?: number; h?: number; on?: boolean }) => (
  <IconButton $w={w} $h={h} $on={on} aria-label={n}>
    <Icon n={n} s={s} />
  </IconButton>
);

const More = ({ w = 10, h = 20 }: { w?: number; h?: number }) => (
  <IconButton $w={w} $h={h} aria-label="More">
    <Caret />
  </IconButton>
);

type ToolSpec = [string, number];

const Tools = ({ row, more }: { row: ToolSpec[]; more?: boolean }) => (
  <ToolRow>
    {row.map(([n, w]) => (
      <Tool key={n} n={n} w={w} />
    ))}
    {more && <More />}
  </ToolRow>
);

interface PanelProps {
  w: number;
  name: string;
  pad?: number;
  drop?: boolean;
  launch?: boolean;
  children: React.ReactNode;
}

const Panel = ({ w, name, pad, drop, launch, children }: PanelProps) => (
  <PanelBox $w={w}>
    <PanelBody $pad={pad}>{children}</PanelBody>
    <PanelTitle>
      <PanelName>
        {name}
        {drop && <Caret big />}
      </PanelName>
      {launch && <Tool n="launch" w={12} h={12} s={6} />}
    </PanelTitle>
  </PanelBox>
);

interface BigProps {
  n: string;
  w: number;
  lines: string[];
  drop?: boolean;
  side?: string;
}

const Big = ({ n, w, lines, drop, side }: BigProps) => (
  <BigButton $w={w}>
    <Icon n={n} s={28} />
    {lines.map((l) => (
      <span key={l}>{l}</span>
    ))}
    {side && <CaretLine>{side}<Caret /></CaretLine>}
    {drop && <Caret />}
  </BigButton>
);

/* ---------- drawing area ---------- */

const Valve = () => (
  <g transform="translate(353 31) scale(.3333)" strokeLinejoin="round">
    <defs>
      <linearGradient id="rim" x1="0" y1="0" x2="0" y2="1">
        <stop offset="0" stopColor="#efefd8" />
        <stop offset=".45" stopColor="#c8c8d0" />
        <stop offset=".75" stopColor="#8e8ecb" />
        <stop offset="1" stopColor="#4a4ac2" />
      </linearGradient>
      <linearGradient id="pipe" x1=".2" y1="0" x2=".35" y2="1">
        <stop offset="0" stopColor="#ecebd6" />
        <stop offset=".45" stopColor="#c9c9d2" />
        <stop offset=".75" stopColor="#8585ca" />
        <stop offset="1" stopColor="#4646c2" />
      </linearGradient>
      <linearGradient id="hole" x1="0" y1="0" x2="0" y2="1">
        <stop offset="0" stopColor="#5252c0" />
        <stop offset=".5" stopColor="#a9a9d0" />
        <stop offset="1" stopColor="#f2f2d4" />
      </linearGradient>
      <linearGradient id="cap" x1="0" y1="0" x2="1" y2="0">
        <stop offset="0" stopColor="#c6c6cf" />
        <stop offset=".5" stopColor="#9b9bcc" />
        <stop offset="1" stopColor="#4343c4" />
      </linearGradient>
      <linearGradient id="bore" x1="0" y1="0" x2="1" y2="0">
        <stop offset="0" stopColor="#fafacc" />
        <stop offset=".45" stopColor="#e4e4d6" />
        <stop offset="1" stopColor="#c2c2d2" />
      </linearGradient>
      <radialGradient id="body" gradientUnits="userSpaceOnUse" cx="480" cy="480" r="440">
        <stop offset="0" stopColor="#e8e8d8" />
        <stop offset=".4" stopColor="#c6c6d0" />
        <stop offset=".7" stopColor="#8686ca" />
        <stop offset="1" stopColor="#3a3ac0" />
      </radialGradient>
    </defs>
    <path d="M806 135L808 105 822 68 850 55 905 38 940 55 985 110 1030 190 1060 275 1085 360 1105 470 1110 560V600L1100 640 1080 665 1020 684 990 680 955 645 920 598z" fill="url(#rim)" stroke="#f4f4f4" strokeWidth="4" />
    <path d="M806 135L808 105 822 68 850 55 880 65 905 90 935 130 970 200 1005 290 1030 390 1050 490 1056 560 1053 630 1030 683 990 680 955 645 920 598 850 400z" fill="#d2d2d0" stroke="#f4f4f4" strokeWidth="3" />
    <path d="M840 168L870 162 905 170 930 205 965 260 990 330 1005 410 1012 480 1010 540 998 568 890 603 840 400z" fill="url(#pipe)" />
    <path d="M840 168l30-6M998 568l-108 35" stroke="#f4f4f4" strokeWidth="4" fill="none" />
    <path d="M380 440L400 600 415 738 480 765 540 782 600 788 680 778 740 758 800 715 850 660 880 605 895 580 893 480 880 400 863 350 700 440z" fill="url(#body)" />
    <path d="M250 335L305 320 325 292 345 360 425 485 440 520 445 580 455 630 450 660 455 690 443 710 445 722 350 752 290 600 220 400z" fill="url(#pipe)" />
    <path d="M250 335L305 320 325 292M445 724L370 748" stroke="#f4f4f4" strokeWidth="4" fill="none" />
    <path d="M415 738Q500 788 600 788T800 715Q860 655 895 580" stroke="#f4f4f4" strokeWidth="4" fill="none" />
    <path d="M325 250V320L340 370 385 430 415 470 430 482 470 490 500 505 545 512 600 518 670 513 700 500 735 495 785 465 820 440 845 395 863 350V250z" fill="url(#cap)" />
    <path d="M863 350V250M325 250v80" stroke="#f4f4f4" strokeWidth="4" />
    <ellipse cx="594" cy="251" rx="270" ry="184" fill="#e9e9d4" stroke="#f6f6f2" strokeWidth="4" />
    <ellipse cx="594" cy="252" rx="144" ry="97" fill="url(#bore)" />
    <path d="M62 350L65 310 82 272 110 260 168 247 200 265 240 315 275 380 315 475 345 590 362 690 368 760 366 810 355 850 335 877 270 892 245 888 150 700z" fill="url(#rim)" stroke="#f4f4f4" strokeWidth="4" />
    <path d="M62 350L65 310 82 272Q115 258 150 290 190 330 230 410 275 520 300 650 320 750 312 830L285 890 250 890 220 860Q165 770 120 660 85 560 65 420z" fill="#d2d2d0" stroke="#f4f4f4" strokeWidth="2" />
    <path d="M103 420L108 390 122 373 150 378 185 400Q215 440 255 570 275 650 270 700L262 745 240 785 215 775 180 730Q150 670 125 580 100 480 103 420z" fill="#d8d8d6" stroke="#f8f8f8" strokeWidth="3" />
    <path d="M115 440L120 405 135 393 170 410Q205 450 240 560 265 650 262 725L248 760 230 768 195 735Q165 680 140 610 112 510 115 440z" fill="url(#hole)" stroke="#f8f8f8" strokeWidth="4" />
    <path d="M170 412Q165 520 192 610T260 725" stroke="#f8f8f8" strokeWidth="4" fill="none" />
  </g>
);

const ViewCube = () => (
  <svg width="88" height="104" viewBox="0 0 88 104" fontFamily="Noto Sans, sans-serif" fontWeight="bold">
    <ellipse cx="47" cy="49" rx="35" ry="23" fill="none" stroke="#4d545d" strokeWidth="9" />
    <path d="M27 15l28-6 12 17-27 9z" fill="#dcdcd8" />
    <path d="M27 15l13 20 1 21-12-14z" fill="#a9aaa8" />
    <path d="M40 35l27-9v20l-26 10z" fill="#cfcfcb" />
    <path d="M27 15l13 20 27-9M40 35l1 21" fill="none" stroke="#555" strokeWidth="1" strokeDasharray="4 1" />
    <text transform="rotate(168 47 22)" x="47" y="25" fontSize="7" textAnchor="middle" fill="#444">TOP</text>
    <text transform="rotate(-12 54 43)" x="54" y="45" fontSize="7" textAnchor="middle" fill="#444">BACK</text>
    <path d="M31 24l2 5M33 31l2 5" stroke="#333" strokeWidth="2" />
    <g fontSize="12" fill="#c9ccd0" textAnchor="middle">
      <text transform="rotate(190 12 56)" x="12" y="60">E</text>
      <text transform="rotate(-28 80 36)" x="80" y="40">W</text>
      <text transform="rotate(22 63 73)" x="63" y="77">N</text>
    </g>
    <rect x="28" y="88" width="37" height="13" rx="3" fill="#a9adb6" stroke="#c5c8ce" />
    <text x="31" y="98" fontSize="9" fontWeight="400" fill="#5f6570">WCS</text>
    <path d="M56 92h5l-2.500 4z" fill="#bfc3ca" />
  </svg>
);

const DrawingScene = () => (
  <Scene aria-label="Valve model">
    <Valve />
    <ellipse cx="828" cy="108" rx="32" ry="108" transform="rotate(-15.500 828 108)" fill="none" stroke="#c9ccd0" />
    <g transform="translate(748 288)">
      <path d="M-4 7Q-8 1-6-4T-2-8 4-6 6 2Q4 8 0 8z" fill="#07090b" stroke="#cfd3d8" strokeWidth="1.300" />
      <path d="M-2-7v5M1-8v5M3-7v5" stroke="#cfd3d8" strokeWidth=".8" />
    </g>
    <g strokeLinecap="round" fill="none" transform="translate(33 387)">
      <path d="M0 30L-36 41" stroke="#b9555a" strokeWidth="4" />
      <path d="M1 30L16 54" stroke="#3f9a44" strokeWidth="4" />
      <path d="M0 28V2" stroke="#35598f" strokeWidth="4" />
      <path d="M0 1v1" stroke="#b5d8f5" strokeWidth="3" />
      <path d="M-1-12h9L-1-3h10" stroke="#2456a5" />
      <path d="M14 44l4 4 5-4M18 48v5" stroke="#2f8a38" />
      <path d="M-33 28l3 4" stroke="#a03030" />
    </g>
  </Scene>
);

/* ---------- data ---------- */

const menus: [string, number][] = [
  ["Home", 50], ["Isos", 33], ["Structure", 56], ["Analysis", 53], ["Modeling", 59],
  ["Visualize", 54], ["Insert", 41], ["Annotate", 57], ["Manage", 52], ["Output", 47],
  ["Add-ins", 51], ["Collaborate", 68], ["Vault", 39], ["Express Tools", 75], ["Featured Apps", 84],
];

const details = [
  "Project XML: C:\\Users\\HI\\Documents\\NEW EPF",
  "Project name: NEW EPF 261122",
  "Project description:",
  "Plant 3D project unit: Mixed Metric",
  "Project number:",
].join("\n");

export default function App() {
  return (
    <Page>
      <GlobalStyle />
      <Window>
        <Header>
          <AppButton aria-label="Application menu">
            <svg width="30" height="31" viewBox="0 0 30 31">
              <path d="M2 22L10 2h5l7 20h-5l-2-5q-5-1-8 5z" fill="#c8262c" />
              <path d="M10 13l2.500-6 2 6q-2-1-4.500 0z" fill="#b3b5b8" />
              <path d="M2 22Q8 12 19 15" fill="none" stroke="#e8474a" strokeWidth="2" />
              <path d="M24 13h5l-2.500 3z" fill="#333" />
              <text x="15" y="29" fontSize="7" fontWeight="bold" textAnchor="middle" fill="#111">P3D</text>
            </svg>
          </AppButton>
          <HeaderRows>
            <TitleRow>
              <QuickBar>
                {["new", "open", "save", "saveAs", "openWeb", "saveWeb", "print", "undo"].map((n) => (
                  <Tool key={n} n={n} s={14} />
                ))}
                <More />
                <Tool n="redo" s={14} />
                <More />
                <Tool n="preview" s={14} />
                <Tool n="menu" w={14} s={11} />
              </QuickBar>
              <WindowTitle>Autodesk AutoCAD Plant 3D 2020{"   "}mopu1</WindowTitle>
              <TitleTools>
                <Tool n="tri" w={10} s={8} />
                <KeywordInput placeholder="Type a keyword or phrase" aria-label="Search" />
                <Tool n="find" s={13} />
                <Tool n="user" s={13} />
                <SignIn>Sign In</SignIn>
                <More w={20} />
                <Tool n="cart" w={18} s={14} />
                <Tool n="a360" w={21} s={14} />
                <More w={8} />
                <Divider />
                <Tool n="help" s={14} />
                <More />
                <WindowControls>
                  <Tool n="min" w={21} s={9} />
                  <Tool n="max" w={21} s={12} />
                  <Tool n="x" w={17} s={12} />
                </WindowControls>
              </TitleTools>
            </TitleRow>
            <MenuRow>
              {menus.map(([m, w]) => (
                <MenuTab key={m} href="#" $w={w} $on={m === "Modeling"}>
                  {m}
                </MenuTab>
              ))}
              <Tool n="panelUp" w={40} h={14} s={12} />
              <More w={5} h={14} />
            </MenuRow>
          </HeaderRows>
        </Header>

        <Ribbon>
          <Panel w={177} name="Modeling" drop>
            <Big n="cylinder" w={58} lines={["Cylinder"]} drop />
            <Big n="extrude" w={50} lines={["Extrude"]} drop />
            <Stack $pad={3}>
              <TextButton><Icon n="polysolid" />Polysolid</TextButton>
              <TextButton><Icon n="presspull" />Presspull</TextButton>
            </Stack>
          </Panel>
          <Panel w={65} name="Mesh" pad={1} launch>
            <Big n="smooth" w={38} lines={["Smooth", "Object"]} />
            <Stack>
              <Tools row={[["ballAdd", 22]]} />
              <Tools row={[["ballSub", 22]]} />
              <Tools row={[["ballEdit", 22]]} />
            </Stack>
          </Panel>
          <Panel w={123} name="Solid Editing" drop>
            <Stack>
              <Tools row={[["union", 22], ["subtract", 23], ["box3", 22]]} more />
              <Tools row={[["intersect", 22], ["slice", 23], ["taper", 22]]} more />
              <ToolRow>
                <Tool n="interfere" w={22} />
                <Tool n="fillet3" w={23} />
                <TextButton $w={65}><Icon n="split" />Separate</TextButton>
                <More />
              </ToolRow>
            </Stack>
          </Panel>
          <Panel w={78} name="Draw" drop>
            <Stack>
              <Tools row={[["polyline", 22], ["planar", 19], ["arc", 26]]} more />
              <Tools row={[["spline", 22], ["line", 19], ["circle", 26]]} more />
              <Tools row={[["polygon", 22], ["rect", 19], ["ellipse", 26]]} more />
            </Stack>
          </Panel>
          <Panel w={121} name="Modify" drop>
            <Stack>
              <Tools row={[["mirror3", 22], ["gizmo", 23], ["move", 19], ["copy", 23], ["trim", 21]]} more />
              <Tools row={[["align3", 22], ["rotate3", 23], ["rotate", 19], ["stretch", 23], ["filletc", 21]]} more />
              <Tools row={[["erase", 22], ["scale3", 23], ["scale", 19], ["offset", 23], ["array", 21]]} more />
            </Stack>
          </Panel>
          <Panel w={64} name="Section" drop launch>
            <Big n="section" w={62} lines={["Section", "Plane"]} />
          </Panel>
          <Panel w={121} name="Coordinates" launch>
            <Stack>
              <ToolRow>
                <Tool n="ucsBulb" w={21} /><More /><Tool n="ucsSave" w={22} /><Tool n="ucsPt" w={24} />
                <Tool n="ucsView" /><Tool n="ucsWorld" />
              </ToolRow>
              <ToolRow>
                <Tool n="ucsRot" w={21} /><More /><Tool n="ucsBack" w={22} /><Tool n="ucsZpt" w={24} />
                <Tool n="ucsZ" /><Tool n="ucs3" />
              </ToolRow>
              <ToolRow>
                <Tool n="ucsGrid" w={21} /><More w={14} />
                <Picker $w={82}>
                  <Icon n="ucsWorld" s={14} />
                  <select aria-label="Coordinate system"><option>World</option></select>
                  <Caret big />
                </Picker>
              </ToolRow>
            </Stack>
          </Panel>
          <Panel w={107} name="View" drop pad={2}>
            <Stack>
              <ToolRow>
                <Picker $w={102}>
                  <Icon n="concept" s={13} />
                  <select aria-label="Visual style"><option>Conceptual</option></select>
                  <Caret big />
                </Picker>
              </ToolRow>
              <ToolRow>
                <Picker $w={102}>
                  <Icon n="unsaved" s={11} />
                  <select aria-label="Named view"><option>Unsaved View</option></select>
                  <Caret big />
                </Picker>
              </ToolRow>
              <ToolRow><Tool n="viewBox" w={17} s={13} /><More /></ToolRow>
            </Stack>
          </Panel>
          <Panel w={143} name="Selection">
            <Big n="culling" w={40} lines={["Culling"]} />
            <Big n="nofilter" w={51} lines={["No Filter"]} drop />
            <Big n="gizmoL" w={51} lines={["Move"]} side="Gizmo" />
          </Panel>
          <Panel w={229} name="Layers" drop>
            <Big n="layerL" w={52} lines={["Layer", "Properties"]} />
            <Stack>
              <ToolRow>
                <Picker $w={175}>
                  <Icon n="bulb" s={14} /><Icon n="sun" s={14} /><Icon n="unlock" s={14} /><Icon n="swatch" s={14} />
                  <select aria-label="Layer"><option>0</option></select>
                  <Caret big />
                </Picker>
              </ToolRow>
              <Tools row={[["lyOff", 20], ["lyIso", 20], ["lyFrz", 20], ["lyLck", 20], ["lyCur", 20]]} />
              <Tools row={[["lyOn", 20], ["lyUniso", 20], ["lyThw", 20], ["lyUnl", 20], ["lyMat", 20]]} />
            </Stack>
          </Panel>
          <Panel w={46} name="Groups">
            <Big n="groupL" w={33} lines={["Group"]} />
            <Stack>
              <Tools row={[["grp1", 18]]} />
              <Tools row={[["grp2", 18]]} />
              <Tool n="grp3" w={18} on />
            </Stack>
          </Panel>
        </Ribbon>

        <FileTabs>
          {["Start", "BUA*", "NEW EPF*", "mopu1*"].map((t) => (
            <FileTab key={t} $on={t === "mopu1*"}>
              <span>{t}</span>
              {t !== "Start" && <Tool n="x" w={18} h={18} s={10} />}
            </FileTab>
          ))}
          <AddTab aria-label="New tab"><Icon n="plus" s={8} /></AddTab>
        </FileTabs>

        <Workspace>
          <Rail>
            <Icon n="dash" s={7} />
            <SideText>Properties</SideText>
          </Rail>
          <Manager>
            <ManagerBody>
              <ManagerHead><Icon n="gripV" s={6} />PROJECT MANAGER</ManagerHead>
              <ManagerForm>
                <ProjectLabel htmlFor="project">Current Project:</ProjectLabel>
                <ProjectRow>
                  <ProjectPick>
                    <select id="project"><option>NEW EPF 261122</option></select>
                    <svg width="14" height="16" viewBox="0 0 14 16"><path d="M4 7l3 3 3-3" fill="none" stroke="#444" /></svg>
                  </ProjectPick>
                  <ProjectTools>
                    <Tool n="print" w={17} s={17} h={18} />
                    <Tool n="docs" w={20} s={16} h={18} />
                    <More w={9} h={18} />
                  </ProjectTools>
                </ProjectRow>
                <SectionHead $gap={8}>
                  <h3>Orthos</h3>
                  <Tool n="mag" w={14} s={13} h={16} />
                  <Tool n="newDwg" w={14} s={14} h={16} />
                  <Tool n="sheets" w={14} s={13} h={16} />
                  <Tool n="refresh" w={15} s={14} h={16} />
                  <More w={13} h={16} />
                </SectionHead>
                <TreeBox>
                  <SearchField>
                    <input placeholder="search" aria-label="Search project" />
                    <Icon n="mag" s={16} />
                  </SearchField>
                  <TreeRow $indent={1}>
                    <Icon n="minusBox" s={9} /><Icon n="proj" s={14} />
                    <Selected>NEW EPF 261122</Selected>
                  </TreeRow>
                  <TreeRow $indent={17}>
                    <Icon n="plusBox" s={9} /><Icon n="ortho" s={14} />
                    <span>Orthographic Drawings</span>
                  </TreeRow>
                </TreeBox>
                <SectionHead $gap={11}>
                  <h3>Details</h3>
                  <Tool n="expDoc" w={14} s={14} h={16} />
                  <Tool n="prevDoc" w={14} s={14} h={16} />
                  <More w={13} h={16} />
                </SectionHead>
                <DetailBox>
                  <p>{details}</p>
                  <ScrollBar>
                    <Tool n="left" w={14} h={14} s={10} />
                    <Track><Thumb /></Track>
                    <Tool n="right" w={14} h={14} s={10} />
                  </ScrollBar>
                </DetailBox>
              </ManagerForm>
            </ManagerBody>
            <SideTabs>
              <SideTab $h={107}><SideText>Source Files</SideText></SideTab>
              <SideTab $h={107} $on><SideText>Orthographic DWG</SideText></SideTab>
              <SideTab $h={108}><SideText>Isometric DWG</SideText></SideTab>
            </SideTabs>
          </Manager>
          <Stage>
            <Viewport>
              <DrawingScene />
              <ViewLabel>[−][Custom View][Conceptual]</ViewLabel>
              <ViewControls>
                <Tool n="min" w={17} h={14} s={10} />
                <Tool n="restore" w={17} h={14} s={9} />
                <Tool n="x" w={16} h={14} s={10} />
              </ViewControls>
              <CubeBox><ViewCube /></CubeBox>
            </Viewport>
            <Command>
              <CommandTools>
                <Tool n="grip" w={18} h={9} s={15} />
                <Tool n="x" w={18} h={16} s={12} />
                <Tool n="wrench" w={18} h={22} s={14} />
              </CommandTools>
              <CommandArea>
                <CommandLog>{"Command: *Cancel*\nCommand:"}</CommandLog>
                <CommandLine>
                  <Icon n="prompt" s={14} />
                  <Caret big fill="#444" />
                  <input placeholder="Type a command" aria-label="Command" />
                </CommandLine>
              </CommandArea>
            </Command>
          </Stage>
          <RightRail><Icon n="calc" s={16} /></RightRail>
        </Workspace>
        <Status>Press ESC or ENTER to exit, or right-click to display shortcut-menu</Status>

        <EditorMark>
          <svg width="44" height="34" viewBox="0 0 44 34" fill="none" stroke="#dfe3e8" strokeOpacity=".6" strokeWidth="5" strokeLinejoin="round">
            <path d="M4 10V5h22l5 6-9 6-18 8v4h22l5-6" />
            <path d="M41 6L22 17l19 11" />
          </svg>
        </EditorMark>
        <Bandicam><span>www.</span><span>BANDICAM</span><small>.COM</small></Bandicam>
        <Activate><strong>Activate Windows</strong>Go to Settings to activate Windows.</Activate>
      </Window>
    </Page>
  );
}
